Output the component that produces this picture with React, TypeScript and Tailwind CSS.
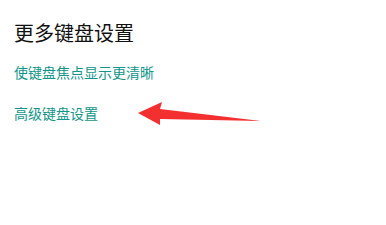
export default function App() {
  return (
    <div
      className="relative w-[386px] h-[225px] bg-white overflow-hidden"
      style={{ fontFamily: '"Noto Sans CJK SC", sans-serif' }}
    >
      <div className="flex flex-col pl-[14px] pt-[20px]">
        <h2 className="text-[20px] leading-[26px] text-[#111]">更多键盘设置</h2>
        <a className="mt-[16px] text-[14px] leading-[20px] text-[#10968a]">使键盘焦点显示更清晰</a>
        <a className="mt-[21px] text-[14px] leading-[20px] text-[#10968a]">高级键盘设置</a>
      </div>
      <svg className="absolute left-0 top-0" width="386" height="225" viewBox="0 0 386 225">
        <polygon
          points="138,113 162,102 160,109 261,121 160,119 160,125"
          fill="#f3302f"
        />
      </svg>
    </div>
  );
}
